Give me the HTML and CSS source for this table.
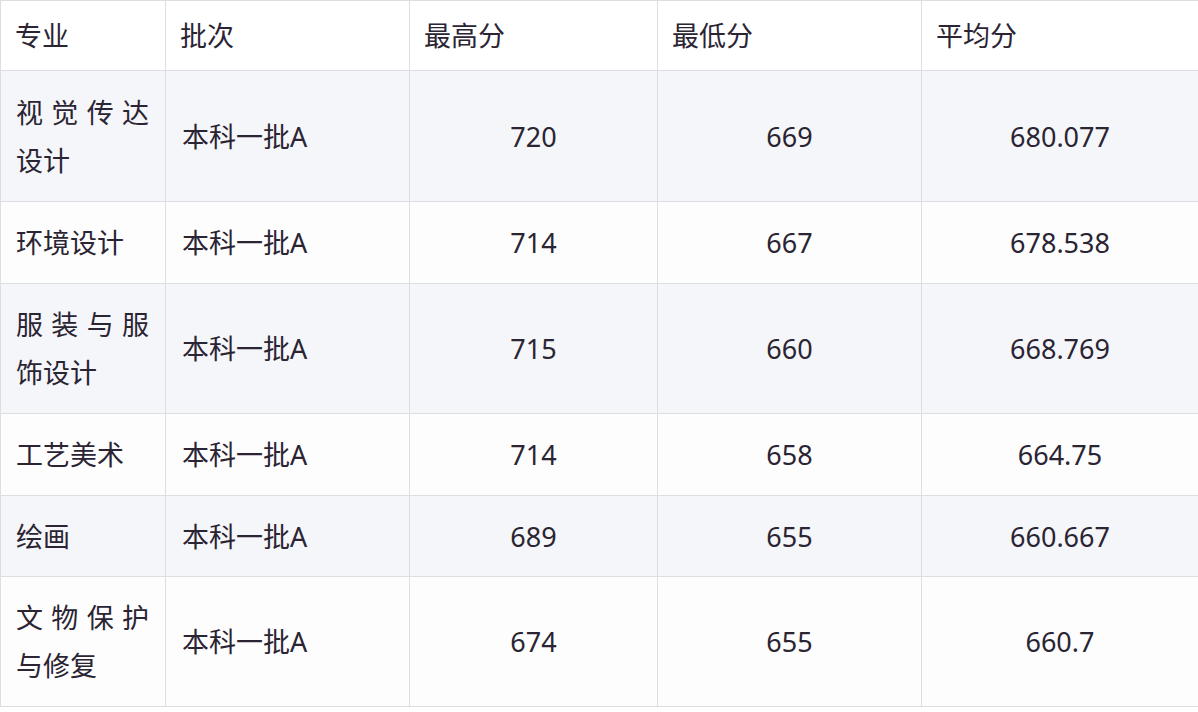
FILE: index.html
```html
<!DOCTYPE html>
<html lang="zh-CN">
<head>
<meta charset="utf-8">
<title>专业分数</title>
<link rel="stylesheet" href="styles.css">
</head>
<body>
<table class="score-table">
  <colgroup>
    <col class="c1"><col class="c2"><col class="c3"><col class="c4"><col class="c5">
  </colgroup>
  <thead>
    <tr class="head">
      <th>专业</th><th>批次</th><th>最高分</th><th>最低分</th><th>平均分</th>
    </tr>
  </thead>
  <tbody>
    <tr class="alt tall"><td class="major">视觉传达设计</td><td class="batch">本科一批A</td><td class="num">720</td><td class="num">669</td><td class="num">680.077</td></tr>
    <tr><td class="major">环境设计</td><td class="batch">本科一批A</td><td class="num">714</td><td class="num">667</td><td class="num">678.538</td></tr>
    <tr class="alt"><td class="major">服装与服饰设计</td><td class="batch">本科一批A</td><td class="num">715</td><td class="num">660</td><td class="num">668.769</td></tr>
    <tr><td class="major">工艺美术</td><td class="batch">本科一批A</td><td class="num">714</td><td class="num">658</td><td class="num">664.75</td></tr>
    <tr class="alt short"><td class="major">绘画</td><td class="batch">本科一批A</td><td class="num">689</td><td class="num">655</td><td class="num">660.667</td></tr>
    <tr><td class="major">文物保护与修复</td><td class="batch">本科一批A</td><td class="num">674</td><td class="num">655</td><td class="num">660.7</td></tr>
  </tbody>
</table>
</body>
</html>
```

FILE: styles.css
```css
html, body {
  margin: 0;
  padding: 0;
  background: #ffffff;
}

body {
  font-family: "Noto Sans", "Noto Sans CJK SC", sans-serif;
  font-size: 27px;
  color: #2a2433;
}

.score-table {
  width: 1198px;
  table-layout: fixed;
  border-collapse: separate;
  border-spacing: 0;
  border-left: 1px solid #dcdee3;
  border-top: 1px solid #dcdee3;
}

.c1 { width: 165px; }
.c2 { width: 244px; }
.c3 { width: 248px; }
.c4 { width: 264px; }
.c5 { width: 277px; }

.score-table th,
.score-table td {
  border-right: 1px solid #dcdee3;
  border-bottom: 1px solid #dcdee3;
  line-height: 48px;
  font-weight: normal;
  vertical-align: middle;
}

.score-table th {
  text-align: left;
  padding: 11px 15px 10px 14px;
  background: #ffffff;
}

.score-table td {
  padding: 17px 16px 16px 16px;
  background: #fdfdfe;
}

.score-table tr.tall td {
  padding-top: 18px;
}

.score-table tr.short td {
  padding-bottom: 15px;
}

.score-table tr.alt td {
  background: #f5f6f9;
}

.score-table td.major {
  text-align: justify;
  word-break: break-all;
  padding-left: 15px;
}

.batch {
  text-align: left;
}

.score-table td.num {
  text-align: center;
  padding-left: 0;
  padding-right: 0;
}
```
